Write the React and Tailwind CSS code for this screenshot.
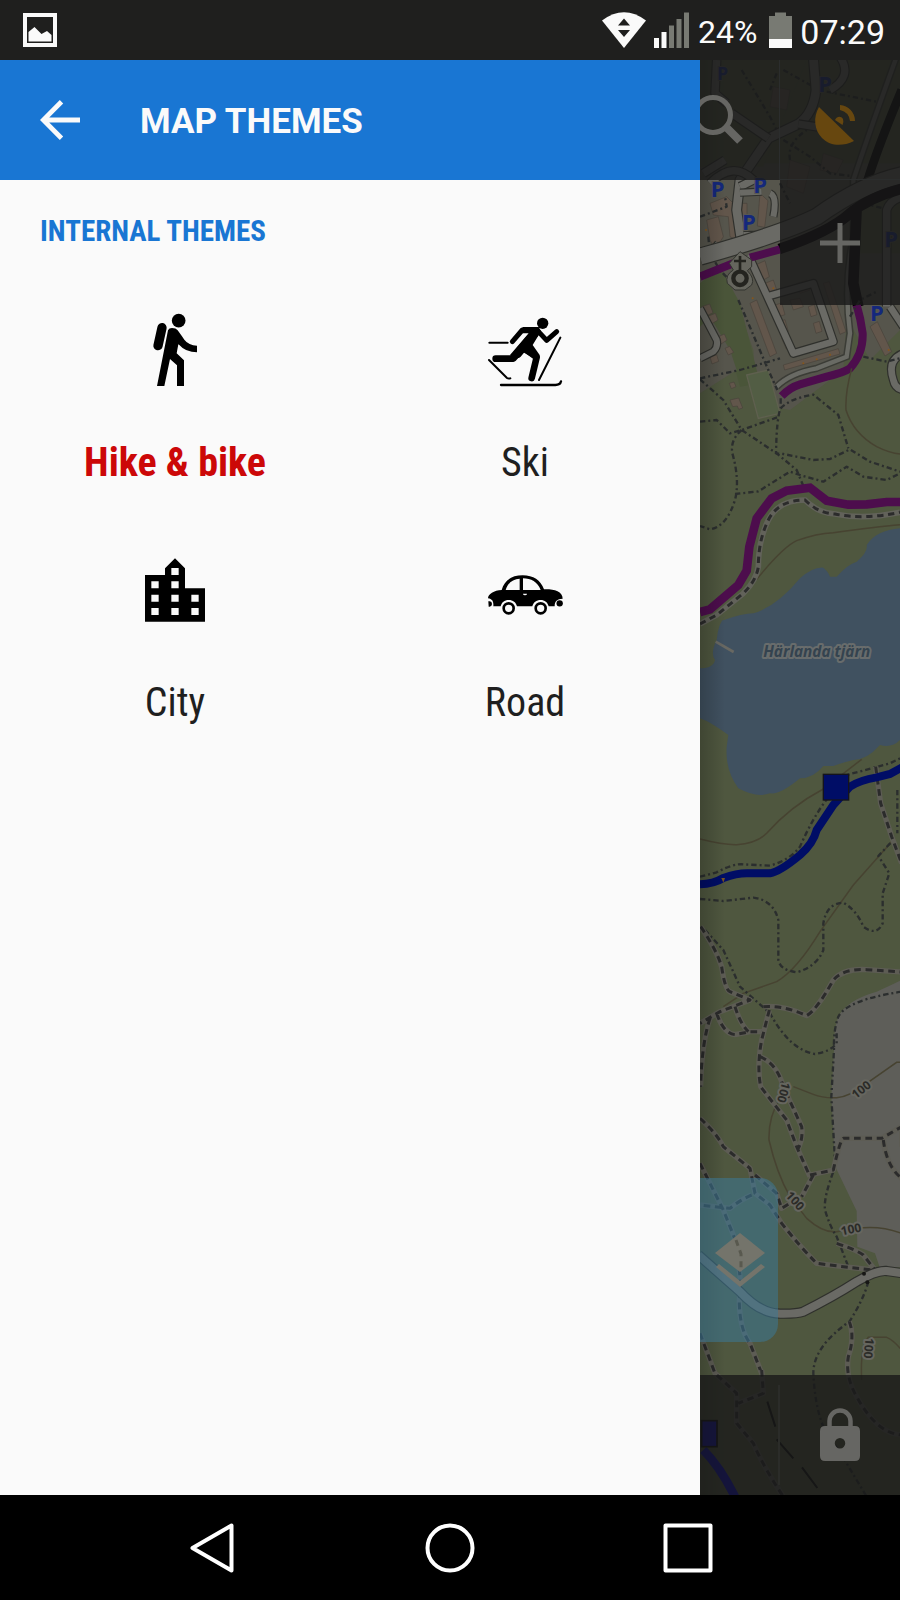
const HikeIcon = () => (
  <svg viewBox="165 0 360 360" className="size-[120px]" aria-hidden="true">
    <circle cx="356" cy="92" r="20.5" />
    <path d="M306 113 L294 167" stroke="#000" strokeWidth="28" strokeLinecap="round" />
    <path d="M324 121 Q327 114 336 114 Q348 114 353 121 Q366 139 373 149 Q386 166 411 167 L411 187 Q377 187 358 165 L355 163 L350 190 L372 211 V288 H351 V226 L330 207 L313 288 H291 Z" />
  </svg>
);

const SkiIcon = () => (
  <svg viewBox="75 0 360 360" className="size-[120px]" fill="none" stroke="#000" strokeLinecap="round" strokeLinejoin="round" aria-hidden="true">
    <circle cx="308" cy="100" r="17" fill="#000" stroke="none" />
    <path d="M248 111 H296 L303 124 L278 165 L299 195 V204 H279 L250 187 L223 213 L210 195 L266 130 H248 Z" fill="#000" stroke="none" />
    <path d="M217 155 L247 120 H285" strokeWidth="15" />
    <path d="M292 121 L320 151 L350 125" strokeWidth="15" />
    <path d="M290 125 L220 206 H167" strokeWidth="20" />
    <path d="M284 130 L232 192" strokeWidth="26" />
    <path d="M258 178 L290 202 L275 264" strokeWidth="20" />
    <path d="M148 158 H203 M147 210 L201 264 Q205 267 211 265 M361 143 L297 270" strokeWidth="6" />
    <path d="M183 285 H346 Q361 285 363 274" strokeWidth="7" />
  </svg>
);

const CityIcon = () => (
  <svg viewBox="45 -30 360 360" className="size-[120px]" aria-hidden="true">
    <path
      fillRule="evenodd"
      d="M135 105 H195 V85 L225 55 L255 85 V145 H315 V245 H135 Z M154 124 v21 h22 v-21 Z M154 164 v21 h22 v-21 Z M154 204 v21 h22 v-21 Z M214 84 v21 h22 v-21 Z M214 124 v21 h22 v-21 Z M214 164 v21 h22 v-21 Z M214 204 v21 h22 v-21 Z M274 164 v21 h22 v-21 Z M274 204 v21 h22 v-21 Z"
    />
  </svg>
);

const CarIcon = () => (
  <svg viewBox="1095 -30 360 360" className="size-[120px]" aria-hidden="true">
    <path
      fillRule="evenodd"
      d="M1205 150 C1213 120 1236 106 1268 106 C1300 106 1322 120 1332 148 C1360 147 1388 153 1388 176 C1371 177 1364 183 1364 199 H1346 C1343 187 1334 180 1322 180 C1309 180 1300 187 1297 199 H1251 C1248 187 1239 180 1226 180 C1213 180 1205 187 1202 199 H1180 C1181 184 1178 178 1164 175 C1164 162 1182 151 1205 150 Z M1217 150 H1259 V116 C1240 117 1224 127 1217 150 Z M1269 115 V150 H1322 C1313 126 1293 115 1269 115 Z M1269 161 q0 5 6 5 q6 0 6 -5 Z"
    />
    <circle cx="1226" cy="205" r="15" fill="none" stroke="#000" strokeWidth="8" />
    <circle cx="1322" cy="205" r="15" fill="none" stroke="#000" strokeWidth="8" />
    <circle cx="1379" cy="190" r="9.5" />
    <path d="M1165 184 h4 q7 1 7 8 q0 7 -7 8 h-3 Z" />
  </svg>
);

const themes = [
  { name: "Hike & bike", Icon: HikeIcon, selected: true },
  { name: "Ski", Icon: SkiIcon },
  { name: "City", Icon: CityIcon },
  { name: "Road", Icon: CarIcon },
];

const StatusBar = () => (
  <div className="flex h-[60px] items-center justify-between bg-[#1f1f1e] pr-[15px] pl-[23px] font-['Roboto',sans-serif] text-[#fafafa]">
    <svg viewBox="0 0 34 34" className="size-[34px]" role="img" aria-label="Screenshot saved">
      <path d="M2 2 H32 V32 H2 Z" fill="none" stroke="#fafafa" strokeWidth="4" />
      <path d="M5.500 19 L11.500 14 L18.500 21 L24 18 L28.500 22 V28.500 H5.500 Z" fill="#fafafa" />
    </svg>
    <div className="flex items-center">
      <svg viewBox="0 0 44 36" className="mr-2 h-9 w-11" role="img" aria-label="Wi-Fi">
        <path d="M0 8.500 Q22 -8 44 8.500 L22 36 Z" fill="#fafafa" />
        <path d="M22 6.500 L28 13.500 H16 Z M16 18 H28 L22 25 Z" fill="#1f1f1e" />
      </svg>
      <svg viewBox="0 0 36 36" className="mr-2 size-9" role="img" aria-label="Mobile signal">
        <path d="M0 26 h5 v10 h-5 Z M7.500 20 h5 v16 h-5 Z" fill="#fafafa" />
        <path d="M15 13.500 h5 V36 h-5 Z M22.500 7 h5 V36 h-5 Z M30 0.500 h5 V36 h-5 Z" fill="#787a73" />
      </svg>
      <span className="mr-3 pt-1 text-[32px] leading-10">24%</span>
      <svg viewBox="0 0 23 36" className="mr-2 h-9 w-[23px]" role="img" aria-label="Battery">
        <path d="M6 0.500 H17 V4 H23 V27 H0 V4 H6 Z" fill="#787a73" />
        <path d="M0 27 H23 V36 H0 Z" fill="#fafafa" />
      </svg>
      <span className="pt-1 text-[34px] leading-10">07:29</span>
    </div>
  </div>
);

const Road = ({ d, w = 22 }) => (
  <g fill="none" strokeLinejoin="round">
    <path d={d} stroke="#2f302c" strokeWidth={w + 7} />
    <path d={d} stroke="#6a6a65" strokeWidth={w} />
  </g>
);

const Track = ({ d, w = 16 }) => (
  <g fill="none" strokeLinejoin="round">
    <path d={d} stroke="#5d5c54" strokeWidth={w} />
    <path d={d} stroke="#2b2b2b" strokeWidth="9" strokeDasharray="20 14" />
  </g>
);

const Path = ({ d }) => (
  <path d={d} fill="none" stroke="#2b2e2e" strokeWidth="7" strokeDasharray="16 9 6 9" strokeLinejoin="round" />
);

const Contour = ({ d }) => <path d={d} fill="none" stroke="#474331" strokeWidth="4.500" />;

const Parking = ({ x, y, size = 66 }) => (
  <text x={x} y={y} fontSize={size} fontWeight="700" fill="#14287c" stroke="#585852" strokeWidth="6" paintOrder="stroke">
    P
  </text>
);

const Elevation = ({ x, y, angle }) => (
  <text
    transform={`translate(${x} ${y}) rotate(${angle})`}
    textAnchor="middle"
    dominantBaseline="central"
    fontSize="36"
    fontWeight="700"
    fill="#2b2b28"
    stroke="#66665f"
    strokeWidth="12"
    strokeLinejoin="round"
    paintOrder="stroke"
  >
    100
  </text>
);

const MapCanvas = () => (
  <svg
    viewBox="30 180 600 4305"
    preserveAspectRatio="xMinYMin slice"
    className="absolute inset-0 size-full font-['Open_Sans',sans-serif]"
    role="img"
    aria-label="Map around Härlanda tjärn"
  >
    <defs>
      <linearGradient id="drawerShade">
        <stop offset="0" stopColor="#000" stopOpacity="0.2" />
        <stop offset="1" stopColor="#000" stopOpacity="0" />
      </linearGradient>
    </defs>
    <rect x="30" y="180" width="600" height="4305" fill="#4f573f" />

    {/* Residential district */}
    <g transform="translate(0 150)">
      <path d="M30 340 H630 V840 L540 930 L470 800 L460 960 L300 1080 L200 1060 L190 900 L120 700 L30 700 Z" fill="#56554c" />
      <path d="M30 30 H350 L220 350 H30 Z M500 470 L630 400 V610 H500 Z" fill="#4f573f" />
      <path d="M30 700 L90 650 L150 760 L210 1000 L150 1010 L120 900 L30 830 Z" fill="#4a5539" />
      <path d="M30 830 L60 800 L120 900 L140 960 L30 1030 Z" fill="#56554c" />
      <g fill="#62564b" stroke="#49433b" strokeWidth="2">
        <path d="M60 460 L110 440 L150 480 L140 570 L120 560 L115 500 L70 495 Z M50 510 L85 500 L100 560 L75 600 L60 570 Z" />
        <path d="M155 460 h16 v90 h-16 Z M210 430 l24 22 -10 80 -22 -4 Z M176 560 l70 -14 4 14 -70 14 Z" />
        <path d="M185 650 L225 632 L238 680 L202 700 Z M180 760 L200 750 L260 910 L240 920 Z" />
        <path d="M225 700 L250 690 L262 725 L238 735 Z M300 750 L330 745 L340 770 L310 780 Z M320 700 l30 -10 10 30 -30 10 Z" />
        <path d="M255 765 l20 -6 10 35 -20 6 Z M265 815 l20 -6 10 35 -20 6 Z M275 865 l20 -6 14 30 -20 8 Z M355 770 l18 -6 8 30 -18 6 Z M370 820 l18 -6 8 30 -18 6 Z" />
        <path d="M400 700 l18 -5 50 150 -18 8 Z M280 945 L445 896 L450 912 L284 960 Z M540 830 L562 815 L605 905 L585 918 Z" />
        <path d="M35 770 l24 -8 10 26 -20 10 Z M50 800 l26 -10 8 20 -20 12 Z M85 860 l18 -8 8 18 -18 12 Z M105 895 l14 -6 12 18 -16 8 Z M60 920 l20 -6 6 20 -20 8 Z M120 1050 l26 -6 12 30 -12 4 -4 -10 -14 2 Z M118 1000 l14 -4 6 14 -14 6 Z" />
        <path d="M250 110 l50 10 -10 60 -50 -10 Z M300 330 l60 20 -20 80 -50 -20 Z M400 310 l60 20 -20 40 -50 -10 Z" />
      </g>
      <g fill="#85561b">
        <circle cx="48" cy="540" r="3" /><circle cx="188" cy="745" r="3" /><circle cx="250" cy="715" r="3" /><circle cx="300" cy="885" r="3" />
        <circle cx="340" cy="940" r="3" /><circle cx="380" cy="928" r="3" /><circle cx="420" cy="914" r="3" /><circle cx="596" cy="900" r="3" />
      </g>
      <path d="M170 975 L235 960 L270 1090 L205 1105 Z" fill="#525d44" stroke="#5f604f" strokeWidth="4" />
      <Path d="M155 60 L240 200 L260 240 M280 60 L370 110 M260 70 L240 120 M30 500 L110 470 L105 440 M55 560 Q60 640 120 690" />
      <Path d="M280 270 L360 320 L420 370 L500 380 M410 125 L560 155 M300 330 Q290 280 350 240 M270 400 L300 460 M520 460 L600 480" />
      <path d="M620 20 Q540 240 490 390 L490 560 Q460 700 480 850 L470 920 L380 955 Q300 970 260 1010" fill="none" stroke="#3b3c36" strokeWidth="22" />
      <path d="M620 20 Q540 240 490 390 L490 560 Q460 700 480 850 L470 920 L380 955 Q300 970 260 1010" fill="none" stroke="#696a64" strokeWidth="13" />
      <path d="M635 120 Q560 300 530 400" fill="none" stroke="#000" strokeWidth="26" />
      <Road w={26} d="M370 20 L378 120 Q370 190 325 222 L235 265 L150 390 L140 480 L155 580" />
      <Road d="M125 190 L235 265 M325 222 L390 232 M80 30 L75 130 L110 160 M450 20 Q490 80 420 120" />
      <Road d="M40 370 L105 330 M60 400 Q130 330 190 390 L150 410" />
      <Road d="M150 428 L215 425 M240 430 Q262 440 250 500 M160 555 H215 M60 610 L85 580" w={18} />
      <Road d="M30 620 Q280 550 380 500 Q520 400 640 375" w={48} />
      <Road d="M175 615 L310 910 L430 875 L370 700 L230 740" w={20} />
      <Road d="M590 770 L590 480 Q600 450 640 440" w={22} />
      <Road d="M30 775 L80 870 Q85 890 70 905 L30 925" w={18} />
      <Road d="M640 910 Q590 930 610 990 Q615 1015 640 1020 M600 770 L640 830" w={20} />
      <path d="M268 597 Q420 545 480 490 Q540 440 640 415 M500 470 L490 700 L505 770" fill="none" stroke="#050205" strokeWidth="32" />
      <path d="M30 680 L130 640 M180 623 L270 598 M500 765 Q512 805 518 850 Q520 910 480 955 Q460 968 410 980 L330 1003 Q300 1012 275 1038" fill="none" stroke="#4d0d4d" strokeWidth="24" />
      <Path d="M145 750 L235 960 L262 1020 M30 985 L150 960 L270 925 M480 800 L510 750 L560 725 M520 920 L590 935 L630 925" />
      <path d="M150 605 L185 630 V650 L172 662 Q195 685 185 705 L165 720 H135 L112 700 Q105 675 130 660 L118 640 Z" fill="#65655d" stroke="#33342f" strokeWidth="3" />
      <circle cx="150" cy="685" r="20" fill="#65655d" stroke="#24241f" strokeWidth="13" />
      <path d="M150 618 V660 M132 633 H168" stroke="#24241f" strokeWidth="8" />
      <Parking x={62} y={442} />
      <Parking x={190} y={430} />
      <Parking x={156} y={540} />
      <Parking x={385} y={125} />
      <Parking x={82} y={90} size={52} />
      <Parking x={583} y={590} />
      <Parking x={540} y={812} />
    </g>

    {/* Forest and purple trail */}
    <g transform="translate(0 900)">
      <Contour d="M485 205 Q465 280 468 330 Q490 400 560 440 Q600 460 630 462" />
      <Contour d="M200 838 Q280 740 320 722 Q380 700 430 698 Q560 680 630 674" />
      <Path d="M30 238 L100 300 L155 390 L260 460 L320 510 L345 570 M30 365 L80 360 L120 400 L155 390 L268 350" />
      <Path d="M155 390 Q120 420 127 460 Q150 540 135 600 Q110 680 60 688 L30 678 M135 582 L205 574 L300 515 L330 525 L400 545 L470 500 L520 530 L590 540 L630 520" />
      <Path d="M272 295 V325 Q260 350 258 460 L280 462 L370 480 L420 477 L480 448 L540 485 L630 515 M272 325 Q300 295 370 284 L445 345 L475 445" />
      <path d="M95 962 Q160 940 190 940 Q260 920 330 835 Q370 800 400 803 Q415 815 420 830 H440 Q470 795 500 785 Q535 755 530 735 Q560 690 630 685 V1320 Q605 1345 570 1335 Q530 1380 490 1380 Q450 1390 430 1398 H400 Q370 1435 330 1435 Q270 1485 240 1480 Q200 1495 145 1465 Q105 1410 110 1340 L115 1305 Q60 1265 30 1255 V1105 Q70 1105 75 1080 Q60 1060 80 1020 Q85 965 110 945 Z" fill="#405160" />
      <path d="M30 972 L80 945 L160 880 Q200 840 205 800 Q205 720 235 660 Q265 600 345 600 Q385 640 435 642 Q520 660 630 637" fill="none" stroke="#62625a" strokeWidth="17" />
      <path d="M30 972 L80 945 L160 880 Q200 840 205 800 Q205 720 235 660 Q265 600 345 600 Q385 640 435 642 Q520 660 630 637" fill="none" stroke="#2b2b2b" strokeWidth="9" strokeDasharray="19 14" />
      <path d="M30 936 L60 928 L145 855 L170 812 L178 740 L200 655 L245 595 L290 572 L360 563 L410 602 L475 614 L530 613 L590 606 H630" fill="none" stroke="#4d0d4d" strokeWidth="26" />
    </g>

    {/* Lake and blue trail */}
    <g transform="translate(0 1800)">
      <path d="M77 125 L131 156" stroke="#686862" strokeWidth="8" />
      <text x="380" y="172" textAnchor="middle" fontSize="46" fontWeight="700" fontStyle="italic" fill="#34434f" stroke="#686c6c" strokeWidth="12" strokeLinejoin="round" paintOrder="stroke">
        Härlanda tjärn
      </text>
      <Contour d="M30 717 Q100 735 140 734 Q200 730 230 700 Q300 620 400 567 L515 478" />
      <Contour d="M605 725 L490 855 L390 995 Q320 1110 260 1145 L160 1180 L100 1220" />
      <Path d="M30 830 L80 817 Q130 790 160 793 L240 797 Q300 780 330 740 Q365 660 405 605 L470 525 L600 490 L630 475" />
      <Track d="M557 500 L572 610 L605 710 L635 790" />
      <path d="M30 853 Q70 852 100 834 Q140 820 170 820 H240 Q270 815 330 765 Q370 730 380 690 L430 615 L480 560 Q510 540 560 532 L600 522 L640 500" fill="none" stroke="#000d66" strokeWidth="24" />
      <path d="M94 834 h11 l-5 14 Z" fill="#7a5420" />
      <rect x="400" y="523" width="76" height="77" fill="#000d66" stroke="#14141c" strokeWidth="4" />
      <Path d="M30 897 L100 903 L190 893 Q250 900 265 960 V1080 Q270 1110 320 1117 Q380 1100 400 1050 V970 Q410 910 460 908 Q500 930 520 980 Q560 1010 578 970 V880 L598 820 L565 768 L605 725 M622 570 V700" />
    </g>

    {/* Southern woods */}
    <g transform="translate(0 2700)">
      <path d="M635 240 Q590 262 560 275 Q470 300 445 350 Q430 390 432 450 L424 590 L436 800 L500 933 L502 1040 L555 1060 L570 1105 L640 1100 Z" fill="#5e5e59" />
      <Contour d="M310 560 L370 583 Q400 595 440 593 Q480 590 530 550 L620 487 H635" />
      <Contour d="M270 595 Q235 650 237 720 Q260 820 300 890 L350 955 Q400 1000 440 995 L500 985 Q570 975 635 1000" />
      <Path d="M45 90 L100 150 L150 260 L240 340 Q300 450 375 462 Q420 455 440 430 V400 M635 275 Q470 300 445 350 Q430 390 432 450 L424 590 L436 800 Q400 890 405 930 Q420 980 440 1010 L475 1100" />
      <Track d="M32 80 Q80 150 95 200 Q105 270 120 275 L180 300 L90 335 L30 370 M60 355 Q35 430 32 560 M80 340 Q100 400 135 404 L180 395 H218 M135 320 Q150 370 175 395 M220 320 Q280 315 350 347 Q380 330 430 240 Q460 205 530 209 L635 216" />
      <Track d="M238 330 L215 420 Q200 500 212 560 Q250 610 290 660 L320 740 L360 830 M210 470 Q260 490 280 560 L335 680 Q340 720 322 750 M360 825 L430 810 Q450 720 460 715 H575 L635 680 M580 720 Q590 800 635 835 M635 680 V740 M370 825 L335 890" />
      <Track d="M30 655 Q80 700 100 740 L180 805 L195 880 L240 915 L275 970 Q330 1040 380 1090 L460 1100 L550 1110 M185 885 Q150 900 120 925 L30 915 M195 825 L260 880 L275 925 L330 890 M440 1030 Q500 1050 520 1065 L555 1110 M30 790 L100 930 L140 1030 L150 1130 L148 1210 Q150 1290 180 1330 L215 1420" />
      <Elevation x={282} y={578} angle={105} />
      <Elevation x={513} y={568} angle={-38} />
    </g>
    <g transform="translate(0 3480)">
      <Contour d="M515 660 Q510 560 535 532 H590 Q610 540 635 570" />
      <Path d="M535 365 Q520 420 478 485 Q370 560 370 640 Q375 740 400 800 L470 910 L530 1010" />
      <Road d="M25 285 L150 395 Q210 460 270 461 Q320 462 340 455 Q430 410 500 365 Q560 330 590 333 L640 340" w={24} />
      <Track d="M30 520 L75 640 L140 700 V790 L190 850 Q220 920 280 1010 M215 630 L220 700 L145 730 M478 485 Q495 530 475 590 Q465 650 500 710 Q560 820 635 825" />
      <circle cx="532" cy="367" r="6" fill="#171715" />
      <circle cx="522" cy="341" r="6" fill="#171715" />
      <Elevation x={316} y={122} angle={48} />
      <Elevation x={483} y={207} angle={-12} />
      <Elevation x={537} y={565} angle={95} />
      <path d="M40 870 Q90 920 135 1010" fill="none" stroke="#0000c0" strokeWidth="26" />
      <rect x="35" y="782" width="46" height="78" fill="#0000c0" stroke="#000" strokeWidth="5" />
      <path d="M232 725 L256 800 M260 838 L310 895 M336 922 L382 984" stroke="#0a0a0a" strokeWidth="6" />
    </g>
    <rect x="30" y="180" width="75" height="4305" fill="url(#drawerShade)" />
  </svg>
);

const MapControls = () => (
  <div className="relative flex h-full flex-col">
    <div className="flex h-[120px] bg-[#191919]/80">
      <button aria-label="Search" className="w-2/5 overflow-hidden border-r border-[#2b2d2d]">
        <svg viewBox="0 0 79 120" className="h-[120px] w-[79px]" fill="none" stroke="#666663">
          <circle cx="13" cy="55" r="17.500" strokeWidth="5" />
          <path d="M27 68 L40 81" strokeWidth="8" />
        </svg>
      </button>
      <button aria-label="GPS" className="flex flex-1 items-center justify-center border-b border-[#2b2d2d]">
        <svg viewBox="0 0 120 120" className="size-[120px]" fill="#67470f">
          <path d="M39 47 L74 81 C62 87 50 86 42 78 C34 70 33 57 39 47 Z" />
          <path d="M55 60 C57 56 61 56 63 59 Q64 62 62.500 65 Z" />
          <path d="M60 45 A16 16 0 0 1 75 61 H70 Q69 52 60 50 Z" />
        </svg>
      </button>
    </div>
    <button aria-label="Zoom in" className="flex h-[125px] w-3/5 items-center justify-center self-end bg-[#191919]/80">
      <svg viewBox="0 0 40 40" className="size-10" stroke="#666663" strokeWidth="5">
        <path d="M0 20 H40 M20 0 V40" />
      </svg>
    </button>
    <div className="flex-1" />
    <button aria-label="Layers" className="mb-[33px] h-[164px] w-[78px] rounded-r-[18px] bg-[#3c7896]/55">
      <svg viewBox="0 0 78 164" className="h-[164px] w-[78px]" fill="#74746b">
        <path d="M40 55 L65 75 L40 94 L15 75 Z" />
        <path d="M16 89 L19 86 L40 103 L61 86 L65 89 L40 109 Z" />
        <path d="M36 62 L41 76 V93" fill="none" stroke="#59594f" strokeWidth="3" strokeDasharray="6 5" />
      </svg>
    </button>
    <div className="flex h-[120px] bg-[#191919]/80">
      <div className="my-2.5 w-2/5 border-r-2 border-[#2b2c29]" />
      <button aria-label="Lock screen" className="flex flex-1 items-center justify-center">
        <svg viewBox="0 0 40 54" className="h-[54px] w-10">
          <path d="M9.500 20 V13 A10.500 10.500 0 0 1 30.500 13 V20" fill="none" stroke="#666663" strokeWidth="4.500" />
          <path fillRule="evenodd" d="M5 18 H35 Q40 18 40 23 V48 Q40 53 35 53 H5 Q0 53 0 48 V23 Q0 18 5 18 Z M20 30 A5 5 0 1 0 20 40.500 A5 5 0 1 0 20 30 Z" fill="#666663" />
        </svg>
      </button>
    </div>
  </div>
);

const NavBar = () => (
  <nav className="flex h-[105px] items-center justify-center gap-[142px] bg-black" aria-label="System">
    <button aria-label="Back" className="flex w-24 justify-center">
      <svg viewBox="0 0 50 50" className="size-[50px]" fill="none" stroke="#fff" strokeWidth="4" strokeLinejoin="round">
        <path d="M5.500 25 L44.500 2.500 V47.500 Z" />
      </svg>
    </button>
    <button aria-label="Home" className="flex w-24 justify-center">
      <svg viewBox="0 0 50 50" className="size-[50px]" fill="none" stroke="#fff" strokeWidth="4">
        <circle cx="25" cy="25" r="22.500" />
      </svg>
    </button>
    <button aria-label="Recent apps" className="flex w-24 justify-center">
      <svg viewBox="0 0 50 50" className="size-[50px]" fill="none" stroke="#fff" strokeWidth="4" strokeLinejoin="round">
        <rect x="2.500" y="2.500" width="45" height="45" />
      </svg>
    </button>
  </nav>
);

export default function App() {
  return (
    <div className="flex min-h-screen flex-col bg-black">
      <StatusBar />
      <div className="grid flex-1 grid-cols-[7fr_2fr]">
        <main className="min-w-0 bg-[#fafafa]">
          <header className="flex h-[120px] items-center bg-[#1976d3] pl-10 text-[#fafafa]">
            <button aria-label="Back">
              <svg viewBox="0 0 40 40" className="size-10" fill="none" stroke="#fafafa" strokeWidth="4.800">
                <path d="M40 20 H4 M21.500 1.800 L3.300 20 L21.500 38.200" />
              </svg>
            </button>
            <h1 className="ml-[60px] pt-1 font-['Roboto',sans-serif] text-[35px] leading-10 font-bold">MAP THEMES</h1>
          </header>
          <section className="pt-8 font-['Roboto_Condensed','Liberation_Sans_Narrow',sans-serif]">
            <h2 className="mb-10 pl-10 text-[29px] leading-[38px] font-bold text-[#1976d3]">INTERNAL THEMES</h2>
            <div className="grid grid-cols-2 gap-y-[39px]">
              {themes.map(({ name, Icon, selected }) => (
                <button key={name} aria-pressed={!!selected} className="flex flex-col items-center gap-[25px]">
                  <Icon />
                  <span className={selected ? "text-[40px] leading-[56px] font-bold text-[#cc0808]" : "text-[40px] leading-[56px] text-[#1f1f1f]"}>
                    {name}
                  </span>
                </button>
              ))}
            </div>
          </section>
        </main>
        <aside className="relative min-w-0 overflow-hidden" aria-label="Map">
          <MapCanvas />
          <MapControls />
        </aside>
      </div>
      <NavBar />
    </div>
  );
}
